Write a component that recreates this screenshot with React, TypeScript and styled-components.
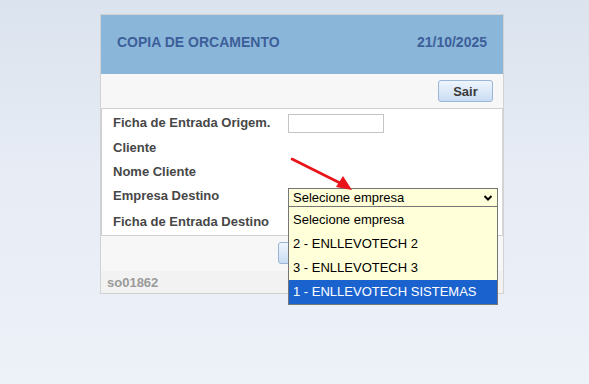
import React from "react";
import styled, { createGlobalStyle } from "styled-components";

const Global = createGlobalStyle`
  html, body { margin: 0; padding: 0; }
  body { font-family: "Liberation Sans", Arial, sans-serif; }
`;

const Page = styled.div`
  min-height: 384px;
  box-sizing: border-box;
  padding: 14px 0 0 100px;
  background: linear-gradient(180deg, #dbe3ee 0%, #e7ecf5 45%, #edf1f8 100%);
`;

const Panel = styled.div`
  position: relative;
  width: 404px;
  box-sizing: border-box;
  border: 1px solid #d2d2d2;
  background: #f7f7f7;
`;

const Header = styled.div`
  height: 59px;
  box-sizing: border-box;
  padding: 0 16px 6px 16px;
  background: #8ab6da;
  display: flex;
  align-items: center;
  justify-content: space-between;
  color: #3d5f99;
  font-size: 14px;
  font-weight: bold;
`;

const Toolbar = styled.div`
  height: 34px;
  box-sizing: border-box;
  padding: 6px 10px 0 0;
  display: flex;
  justify-content: flex-end;
  align-items: flex-start;
`;

const Button = styled.button<{ $w: number }>`
  width: ${(p) => p.$w}px;
  height: 22px;
  padding: 0;
  border: 1px solid #9ab5d6;
  border-radius: 3px;
  background: linear-gradient(180deg, #eef5fd 0%, #dbe8f8 55%, #c9dcf3 100%);
  font-family: "Liberation Sans", Arial, sans-serif;
  font-size: 13px;
  font-weight: bold;
  color: #3a3a3a;
`;

const FormBox = styled.div`
  box-sizing: border-box;
  border: 1px solid #cfcfcf;
  border-right-color: #d6d6d6;
  background: #ffffff;
  padding: 0 4px 0 11px;
  display: grid;
  grid-template-columns: 175px 1fr;
  grid-template-rows: 26px 24px 24px 24px 28px;
  align-items: center;
`;

const Label = styled.div`
  font-size: 13px;
  font-weight: bold;
  color: #474747;
`;

const TextInput = styled.div`
  width: 96px;
  height: 19px;
  box-sizing: border-box;
  border: 1px solid #c4c4c4;
  background: #fff;
  margin-top: 2px;
`;

const SelectWrap = styled.div`
  position: relative;
  align-self: start;
  margin-top: 5px;
  width: 210px;
  z-index: 2;
`;

const SelectBox = styled.div`
  height: 19px;
  box-sizing: border-box;
  border: 1px solid #767676;
  background: #ffffd9;
  display: flex;
  align-items: center;
  justify-content: space-between;
  padding: 0 4px 0 4px;
  font-size: 13px;
  color: #000;
`;

const List = styled.div`
  position: absolute;
  left: 0;
  top: 100%;
  width: 210px;
  box-sizing: border-box;
  border: 1px solid #767676;
  border-top: none;
  background: #ffffd9;
  padding-top: 1px;
`;

const Option = styled.div<{ $active?: boolean }>`
  height: 24px;
  line-height: 24px;
  padding-left: 4px;
  font-size: 13px;
  color: ${(p) => (p.$active ? "#ffffff" : "#000000")};
  background: ${(p) => (p.$active ? "#1a63cf" : "transparent")};
`;

const Arrow = styled.svg`
  position: absolute;
  left: 187px;
  top: 139px;
  overflow: visible;
  pointer-events: none;
  z-index: 3;
`;

const Actions = styled.div`
  height: 35px;
  box-sizing: border-box;
  padding: 6px 0 0 177px;
  display: flex;
  justify-content: flex-start;
`;

const Footer = styled.div`
  height: 22px;
  box-sizing: border-box;
  padding-left: 6px;
  background: #f2f2f2;
  display: flex;
  align-items: center;
  font-size: 13px;
  font-weight: bold;
  color: #9a9a9a;
`;

const Chevron = () => (
  <svg width="10" height="8" viewBox="0 0 10 8">
    <path d="M1.5 2 L5 5.5 L8.5 2" fill="none" stroke="#000" strokeWidth="2" />
  </svg>
);

export default function App() {
  return (
    <>
      <Global />
      <Page>
        <Panel>
          <Header>
            <span>COPIA DE ORCAMENTO</span>
            <span>21/10/2025</span>
          </Header>
          <Toolbar>
            <Button $w={55}>Sair</Button>
          </Toolbar>
          <FormBox>
            <Label>Ficha de Entrada Origem.</Label>
            <TextInput />
            <Label>Cliente</Label>
            <div />
            <Label>Nome Cliente</Label>
            <div />
            <Label>Empresa Destino</Label>
            <SelectWrap>
              <SelectBox>
                <span>Selecione empresa</span>
                <Chevron />
              </SelectBox>
              <List>
                <Option>Selecione empresa</Option>
                <Option>2 - ENLLEVOTECH 2</Option>
                <Option>3 - ENLLEVOTECH 3</Option>
                <Option $active>1 - ENLLEVOTECH SISTEMAS</Option>
              </List>
            </SelectWrap>
            <Label>Ficha de Entrada Destino</Label>
            <div />
          </FormBox>
          <Actions>
            <Button $w={80}>Copiar</Button>
          </Actions>
          <Footer>so01862</Footer>
          <Arrow width="70" height="40">
            <line x1="4" y1="5" x2="56" y2="31" stroke="#e8141a" strokeWidth="2.6" strokeLinecap="round" />
            <polygon points="64,36 48,33 55,22" fill="#e8141a" />
          </Arrow>
        </Panel>
      </Page>
    </>
  );
}
